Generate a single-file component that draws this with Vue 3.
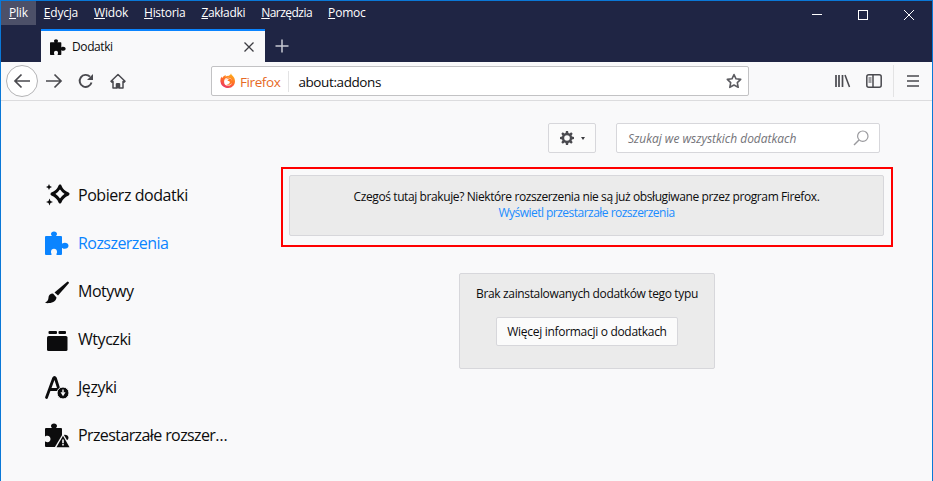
<script setup>
const menus = [
  { k: 'P', r: 'lik', active: true },
  { k: 'E', r: 'dycja' },
  { k: 'W', r: 'idok' },
  { k: 'H', r: 'istoria', fit: 'tight' },
  { k: 'Z', r: 'akładki', fit: 'tight' },
  { k: 'N', r: 'arzędzia', fit: 'tighter' },
  { k: 'P', r: 'omoc' }
]
const knobTopRight = 'M9 .5C10.800 .5 12 1.700 12 3C12 4 11.200 4.300 11.200 5H16Q17 5 17 6V12.600C17.600 12.600 18 11.800 19.800 11.800C21.800 11.800 23.500 13 23.500 14.800C23.500 16.600 21.800 17.800 19.800 17.800C18 17.800 17.600 17 17 17V23Q17 24 16 24'
const knobTopLeft = 'V6Q0 5 1 5H6.800C6.800 4.300 6 4 6 3C6 1.700 7.200 .5 9 .5Z'
const puzzle = knobTopRight + 'H12C11.400 24 11.200 23.400 11.500 22.800C12 22 12 21.500 12 20.800C12 19 10.800 17.800 9 17.800C7.200 17.800 6 19 6 20.800C6 21.500 6 22 6.500 22.800C6.800 23.400 6.600 24 6 24H1Q0 24 0 23' + knobTopLeft
const puzzleOld = knobTopRight + 'H1Q0 24 0 23V18.500C.6 18.500 1 19.200 2.500 19.200C4.300 19.200 5.500 17.800 5.500 16C5.500 14.200 4.300 12.800 2.500 12.800C1 12.800 .6 13.500 0 13.500' + knobTopLeft
const side = [
  { id: 'get', label: 'Pobierz dodatki' },
  { id: 'ext', label: 'Rozszerzenia', active: true },
  { id: 'theme', label: 'Motywy' },
  { id: 'plug', label: 'Wtyczki' },
  { id: 'lang', label: 'Języki' },
  { id: 'old', label: 'Przestarzałe rozszer…', long: true }
]
</script>

<template>
  <div class="win">
    <div class="menubar">
      <span v-for="m in menus" :key="m.k + m.r" class="menu" :class="[m.fit, { on: m.active }]"><u>{{ m.k }}</u>{{ m.r }}</span>
      <div class="winbtns">
        <svg width="46" height="28" viewBox="0 0 46 28"><path d="M18 13.500h10" stroke="#fff" fill="none"/></svg>
        <svg width="46" height="28" viewBox="0 0 46 28"><rect x="18.500" y="9.500" width="9" height="9" stroke="#fff" fill="none"/></svg>
        <svg width="46" height="28" viewBox="0 0 46 28"><path d="M18 9l10 10M28 9L18 19" stroke="#fff" fill="none"/></svg>
      </div>
    </div>

    <div class="tabstrip">
      <div class="tab">
        <svg class="tabicon" width="16" height="16" viewBox="0 0 24 24"><path :d="puzzle" fill="#0c0c0d"/></svg>
        <span class="tabtitle">Dodatki</span>
        <svg class="tabclose" width="10" height="10" viewBox="0 0 10 10"><path d="M.5.500l9 9M9.500.500l-9 9" stroke="#3d3d42" stroke-width="1.300" fill="none"/></svg>
      </div>
      <svg class="newtab" width="14" height="14" viewBox="0 0 14 14"><path d="M7 .500v13M.500 7h13" stroke="#c8c9d2" stroke-width="1.500" fill="none"/></svg>
    </div>

    <div class="toolbar">
      <div class="backcircle">
        <svg width="18" height="16" viewBox="0 0 18 16"><path d="M17 8H2M8.500 1.500L2 8l6.500 6.500" stroke="#4a4a4f" stroke-width="1.700" fill="none"/></svg>
      </div>
      <svg class="tb fwd" width="18" height="16" viewBox="0 0 18 16"><path d="M1 8h15M9.500 1.500L16 8l-6.500 6.500" stroke="#4a4a4f" stroke-width="1.700" fill="none"/></svg>
      <svg class="tb reload" width="16" height="16" viewBox="0 0 16 16"><path d="M13.500 9.500A6 6 0 1 1 12 3.700" stroke="#4a4a4f" stroke-width="1.900" fill="none"/><path d="M15 1v6H9z" fill="#4a4a4f"/></svg>
      <svg class="tb home" width="16" height="16" viewBox="0 0 16 16"><path d="M8 1.500L1 8.300l1 1 1-.9V15h3.500v-4h3v4H13V8.400l1 .9 1-1z" stroke="#4a4a4f" stroke-width="1.500" fill="none" stroke-linejoin="round"/><rect x="6.500" y="10" width="3" height="5.500" fill="#4a4a4f"/></svg>

      <div class="urlbar">
        <svg class="fx" width="16" height="16" viewBox="0 0 16 16">
          <defs>
            <linearGradient id="fxg" x1="0.700" y1="0" x2="0.200" y2="1">
              <stop offset="0" stop-color="#ffb21a"/><stop offset=".5" stop-color="#ff6a2a"/><stop offset="1" stop-color="#e8316e"/>
            </linearGradient>
          </defs>
          <path d="M11 .300c.3 1.800 1.700 2.400 2.600 3.700.6.800.9 1.300 1 2 .8 2.200.4 4.700-1 6.500A7.600 7.600 0 0 1 .400 8.500C.2 6.800.6 5 1.500 3.600c.1.700.4 1.200.8 1.500C3 3.500 4.600 2.300 6 2c-.3.500-.5 1-.4 1.500C7.500 3 10.500 3 11 .300z" fill="url(#fxg)"/>
          <circle cx="8" cy="8.700" r="3.900" fill="#fff"/>
          <path d="M5 6.700c1.500-1 3-1 4 .1-1 .1-1.400.5-1.500 1 1.600 0 2.700.8 2.300 2-.3 1-2 1.700-3.300 1.200 2 1.700 5.500.8 5.700-2C12.300 6 9 3.800 5 6.700z" fill="#ff7a1f"/>
        </svg>
        <span class="fxlabel">Firefox</span>
        <span class="urlsep"></span>
        <span class="urltext">about:addons</span>
        <svg class="star" width="16" height="16" viewBox="0 0 16 16"><path d="M8 1.500l2 4.300 4.700.6-3.400 3.200.9 4.700L8 12l-4.200 2.300.9-4.700L1.300 6.400 6 5.800z" stroke="#5c5c61" stroke-width="1.600" fill="none" stroke-linejoin="round"/></svg>
      </div>

      <svg class="lib" width="16" height="14" viewBox="0 0 16 14"><path d="M1 1v12M4 1v12M7.500 1v12" stroke="#4a4a4f" stroke-width="1.700" fill="none"/><path d="M10 1l4.500 12" stroke="#4a4a4f" stroke-width="1.500" fill="none"/></svg>
      <svg class="sb" width="16" height="14" viewBox="0 0 16 14"><rect x=".800" y=".800" width="14.400" height="12.400" rx="2" stroke="#4a4a4f" stroke-width="1.500" fill="none"/><path d="M7 1v12" stroke="#4a4a4f" stroke-width="1.500"/><path d="M2.500 3.500h3v1h-3zM2.500 5.500h3v1h-3zM2.500 7.500h3v1h-3z" fill="#4a4a4f"/></svg>
      <span class="tbsep"></span>
      <svg class="burger" width="12" height="12" viewBox="0 0 12 12"><path d="M0 1h12M0 6h12M0 11h12" stroke="#4a4a4f" stroke-width="1.700"/></svg>
    </div>

    <div class="content">
      <nav class="sidebar">
        <div v-for="s in side" :key="s.id" class="cat" :class="{ active: s.active, long: s.long }">
          <span class="caticon">
            <svg v-if="s.id === 'get'" width="24" height="24" viewBox="0 0 24 24">
              <path d="M15 3Q17 8.500 23 11Q17 13.500 15 19Q13 13.500 7 11Q13 8.500 15 3Z" stroke="#0c0c0d" stroke-width="3" stroke-linejoin="round" fill="none"/>
              <path d="M4 1l.9 2.100 2.100.9-2.100.9L4 7l-.9-2.100L1 4l2.100-.9zM4.500 15.500l1 2.500 2.500 1-2.500 1-1 2.500-1-2.500L1 19l2.500-1z" fill="#0c0c0d"/>
            </svg>
            <svg v-else-if="s.id === 'ext'" width="24" height="24" viewBox="0 0 24 24"><path :d="puzzle" fill="#0a84ff"/></svg>
            <svg v-else-if="s.id === 'theme'" width="24" height="24" viewBox="0 0 24 24">
              <path d="M22.500 2.500Q24 2.500 24 4L13 16.500L9.500 13.500Z" fill="#0c0c0d"/>
              <path d="M8 14.500C5 14.500 3.500 16.500 3.500 18.500C3.500 21 2 22.500 0 24C4 24.500 11 24 11.500 18.500Z" fill="#0c0c0d"/>
            </svg>
            <svg v-else-if="s.id === 'plug'" width="24" height="24" viewBox="0 0 24 24">
              <rect x="2" y="9" width="20.500" height="15" rx="1.500" fill="#0c0c0d"/>
              <rect x="3.500" y="4" width="8.500" height="3" rx="1" fill="#0c0c0d"/>
              <rect x="13.500" y="4" width="7.500" height="3" rx="1" fill="#0c0c0d"/>
            </svg>
            <svg v-else-if="s.id === 'lang'" width="24" height="24" viewBox="0 0 24 24">
              <path d="M1.500 22.500L8.500 3.500Q9.500 1.500 10.500 3.500L13.800 14M5 14.500h8" stroke="#0c0c0d" stroke-width="2.800" fill="none" stroke-linecap="round" stroke-linejoin="round"/>
              <circle cx="18" cy="18" r="6" fill="#0c0c0d" stroke="#f9f9fa" stroke-width="1"/>
              <path d="M17.300 14.500h1.400v3h-1.400z" fill="#f9f9fa"/>
              <path d="M15.500 17.200h5l-2.500 4z" fill="#f9f9fa"/>
            </svg>
            <svg v-else width="24" height="24" viewBox="0 0 24 24">
              <path :d="puzzleOld" fill="#0c0c0d"/>
              <path d="M18 10.500L9 25.500H27z" fill="#f9f9fa"/>
              <path d="M18 12.800L11.500 24.200h13z" fill="#0c0c0d"/>
              <path d="M17.200 16.500h1.600v3.800h-1.600zM17.200 21h1.600v1.600h-1.600z" fill="#f9f9fa"/>
            </svg>
          </span>
          <span class="catname">{{ s.label }}</span>
        </div>
      </nav>

      <main class="main">
        <div class="head">
          <button class="gear">
            <svg width="14" height="14" viewBox="0 0 16 16">
              <path d="M6.800 0h2.400l.4 2.300 1.300.5L12.800 1.500l1.700 1.700-1.300 1.900.5 1.300 2.300.4v2.400l-2.300.4-.5 1.300 1.300 1.900-1.700 1.700-1.900-1.300-1.300.5-.4 2.300H6.800l-.4-2.300-1.300-.5-1.900 1.300-1.700-1.700 1.300-1.900-.5-1.300L0 9.200V6.800l2.300-.4.500-1.300-1.300-1.900 1.700-1.700 1.900 1.300 1.300-.5z" fill="#4a4a4f"/>
              <circle cx="8" cy="8" r="3.200" fill="#fbfbfb"/>
            </svg>
            <span class="caret"></span>
          </button>
          <div class="search">
            <span class="ph">Szukaj we wszystkich dodatkach</span>
            <svg width="16" height="16" viewBox="0 0 16 16"><circle cx="9.800" cy="6.200" r="5.200" stroke="#9a9a9e" stroke-width="1.200" fill="none"/><path d="M6 10L1 15" stroke="#9a9a9e" stroke-width="1.500"/></svg>
          </div>
        </div>

        <div class="redbox">
          <div class="notice">
            <div>Czegoś tutaj brakuje? Niektóre rozszerzenia nie są już obsługiwane przez program Firefox.</div>
            <a class="link">Wyświetl przestarzałe rozszerzenia</a>
          </div>
        </div>

        <div class="empty">
          <div class="emptytext">Brak zainstalowanych dodatków tego typu</div>
          <button class="more">Więcej informacji o dodatkach</button>
        </div>
      </main>
    </div>
  </div>
</template>

<style>
html, body { margin: 0; padding: 0; background: #f9f9fa; overflow: hidden; }
</style>

<style scoped>
.win {
  width: 933px;
  height: 481px;
  box-sizing: border-box;
  border: 1px solid #0a78d7;
  border-bottom: 0;
  display: flex;
  flex-direction: column;
  font-family: "Open Sans", "Noto Sans", sans-serif;
  color: #0c0c0d;
  background: #f9f9fa;
  overflow: hidden;
}
.menubar {
  height: 28px;
  background: #1f2544;
  display: flex;
  align-items: flex-start;
  flex: none;
}
.menu {
  color: #fff;
  font-size: 12px;
  letter-spacing: -0.2px;
  padding: 0 8px;
  height: 24px;
  line-height: 24px;
  white-space: nowrap;
}
.menu.tight { letter-spacing: -0.3px; }
.menu.tighter { letter-spacing: -0.53px; }
.menu.on { background: #4c5068; }
.winbtns { margin-left: auto; display: flex; }
.winbtns svg { display: block; }
.tabstrip {
  height: 33px;
  background: #1f2544;
  display: flex;
  align-items: stretch;
  flex: none;
  padding-left: 40px;
}
.tab {
  width: 224px;
  box-sizing: border-box;
  background: #f9f9fa;
  border-top: 2px solid #0a84ff;
  display: flex;
  align-items: center;
  padding: 0 11px 0 9px;
}
.tabicon { flex: none; }
.tabtitle { font-size: 12px; letter-spacing: -0.4px; margin-left: 6px; flex: 1; }
.newtab { align-self: center; margin-left: 10px; }
.toolbar {
  height: 39px;
  flex: none;
  box-sizing: border-box;
  background: #f9f9fa;
  border-bottom: 1px solid #dcdcde;
  display: flex;
  align-items: center;
  padding-left: 5px;
}
.backcircle {
  width: 32px;
  height: 32px;
  box-sizing: border-box;
  border: 1px solid #b4b4b6;
  border-radius: 50%;
  background: #fff;
  display: flex;
  align-items: center;
  justify-content: center;
  flex: none;
}
.tb { flex: none; }
.fwd { margin-left: 7px; }
.reload { margin-left: 15px; }
.home { margin-left: 16px; }
.urlbar {
  margin-left: 85px;
  width: 538px;
  height: 30px;
  box-sizing: border-box;
  background: #fff;
  border: 1px solid #c2c2c4;
  border-radius: 2px;
  display: flex;
  align-items: center;
  padding: 0 6px 0 8px;
  flex: none;
}
.fx { flex: none; }
.fxlabel { color: #e66a24; font-size: 13.500px; letter-spacing: -0.4px; margin-left: 4px; padding-top: 1px; }
.urlsep { width: 1px; height: 21px; background: #e3e3e4; margin-left: 8px; }
.urltext { font-size: 13.500px; letter-spacing: -0.4px; margin-left: 9px; flex: 1; padding-top: 1px; }
.lib { margin-left: 86px; flex: none; }
.sb { margin-left: 15px; flex: none; }
.tbsep { width: 1px; height: 32px; background: #e3e3e4; margin-left: 11px; flex: none; }
.burger { margin-left: 13px; flex: none; }

.content { flex: 1; display: flex; min-height: 0; }
.sidebar {
  width: 280px;
  flex: none;
  box-sizing: border-box;
  padding: 70px 0 0 44px;
}
.cat { height: 48px; display: flex; align-items: center; }
.caticon { width: 24px; height: 24px; flex: none; display: block; }
.caticon svg { display: block; overflow: visible; }
.catname { margin-left: 9px; font-size: 16px; letter-spacing: -0.45px; white-space: nowrap; }
.cat.active .catname { color: #0a84ff; letter-spacing: -0.55px; }
.cat.long .catname { letter-spacing: -0.6px; }

.main { width: 612px; flex: none; display: flex; flex-direction: column; }
.head {
  display: flex;
  justify-content: flex-end;
  align-items: center;
  gap: 20px;
  padding: 22px 13px 0 0;
  height: 30px;
  flex: none;
}
.gear {
  width: 48px;
  height: 30px;
  box-sizing: border-box;
  background: #fbfbfb;
  border: 1px solid #d7d7db;
  border-radius: 2px;
  display: flex;
  align-items: center;
  justify-content: center;
  gap: 7px;
  padding: 0;
}
.caret {
  width: 0;
  height: 0;
  border-left: 2.500px solid transparent;
  border-right: 2.500px solid transparent;
  border-top: 3px solid #3a3a3e;
}
.search {
  width: 264px;
  height: 30px;
  box-sizing: border-box;
  background: #fff;
  border: 1px solid #d7d7db;
  border-radius: 2px;
  display: flex;
  align-items: center;
  justify-content: space-between;
  padding: 0 10px 0 11px;
}
.ph { font-size: 12px; font-style: italic; letter-spacing: -0.03px; color: #737378; white-space: nowrap; }
.redbox {
  margin-top: 14px;
  box-sizing: border-box;
  height: 80px;
  border: 2px solid #f00;
  padding: 6px 7px 9px 6px;
  flex: none;
}
.notice {
  height: 100%;
  box-sizing: border-box;
  background: #ebebeb;
  border: 1px solid #d7d7db;
  border-radius: 2px;
  text-align: center;
  font-size: 12px;
  letter-spacing: -0.4px;
  line-height: 16px;
  padding-top: 13px;
}
.link { color: #1a8cff; display: block; letter-spacing: -0.52px; }
.empty {
  margin: 26px 0 0 178px;
  width: 256px;
  height: 96px;
  box-sizing: border-box;
  background: #ebebeb;
  border: 1px solid #d7d7db;
  border-radius: 2px;
  text-align: center;
  font-size: 12px;
  letter-spacing: -0.35px;
  padding-top: 11px;
  flex: none;
}
.emptytext { line-height: 17px; }
.more {
  margin-top: 15px;
  width: 182px;
  height: 29px;
  box-sizing: border-box;
  background: #fbfbfb;
  border: 1px solid #d7d7db;
  border-radius: 2px;
  font: inherit;
  letter-spacing: -0.3px;
  color: #0c0c0d;
  padding: 0;
}
</style>
